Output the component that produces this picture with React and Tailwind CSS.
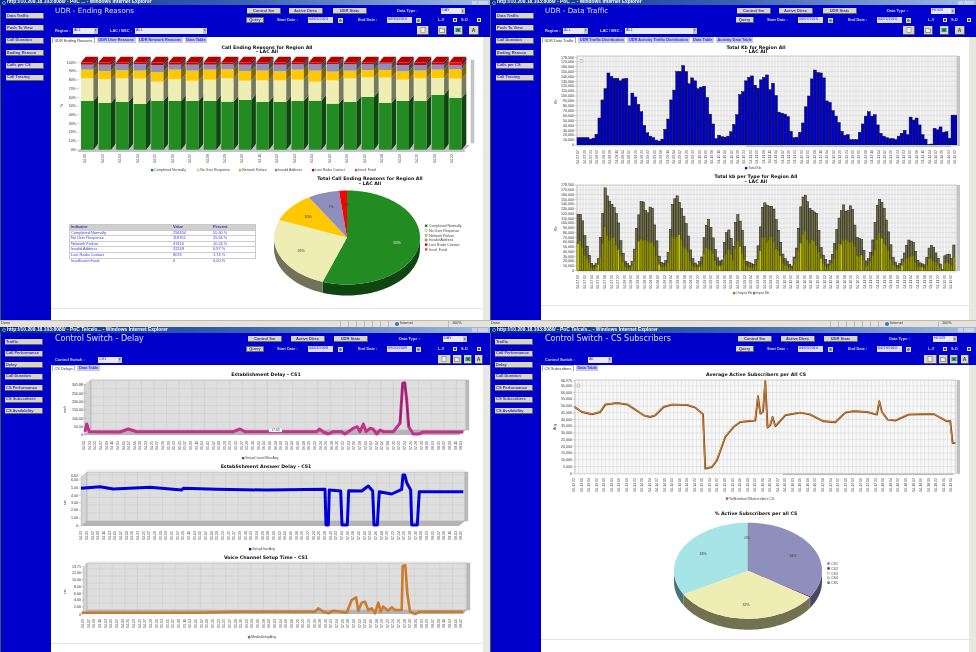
import React from 'react';

// zoom crops were 3x, so most chart points below are kept in crop coords and mapped here
const pts = (list, oy) => list.map(([x, y]) => `${(x / 3).toFixed(1)},${(y / 3 + oy).toFixed(1)}`).join(' ');

const dayLabel = (i, startMonth, startDay) => {
  let m = startMonth, d = startDay + i;
  const len = (mm) => [31, 28, 31, 30, 31, 30, 31, 31, 30, 31, 30, 31][(mm - 1) % 12];
  while (d > len(m)) { d -= len(m); m = m % 12 + 1; }
  return `${String(m).padStart(2, '0')}-${String(d).padStart(2, '0')}`;
};
const hourLabel = (i, day, hour, step) => {
  const h = hour + i * step;
  return `04-${String(day + Math.floor(h / 24)).padStart(2, '0')} ${String(h % 24).padStart(2, '0')}`;
};

const DateTicks = ({ x0, x1, count, y, label, size = 3.5 }) => (
  <g fill="#444" fontSize={size}>
    {Array.from({ length: count }, (_, i) => {
      const x = x0 + (x1 - x0) * i / (count - 1);
      return <text key={i} transform={`translate(${x + 1.2},${y}) rotate(-90)`} textAnchor="end">{label(i)}</text>;
    })}
  </g>
);

const ChartTitle = ({ x, y, lines }) => (
  <g fontSize="4.7" fontWeight="700" fill="#111" textAnchor="middle" className="font-[family-name:DejaVu_Sans,Verdana,sans-serif]">
    {lines.map((t, i) => <text key={t} x={x} y={y + i * 4.8}>{t}</text>)}
  </g>
);

const YTicks = ({ x, items }) => (
  <g fontSize="3.6" fill="#333" textAnchor="end">
    {items.map(([t, y]) => (
      <g key={t + y}>
        <text x={x} y={y + 1.2}>{t}</text>
        <line x1={x + 0.5} x2={x + 2.5} y1={y} y2={y} stroke="#777" strokeWidth="0.4" />
      </g>
    ))}
  </g>
);

const Legend = ({ y, items, size = 3.5 }) => (
  <g fontSize={size} fill="#444">
    {items.map(([t, x, c]) => (
      <g key={t}>
        <rect x={x} y={y - 2} width="2.2" height="2.2" fill={c} stroke="#555" strokeWidth="0.2" />
        <text x={x + 3.2} y={y}>{t}</text>
      </g>
    ))}
  </g>
);

// clockwise from the top, as the chart library drew them
const Pie = ({ cx, cy, rx, ry, depth, slices }) => {
  const at = (a, dy = 0) => {
    const r = a * Math.PI / 180;
    return [cx + rx * Math.sin(r), cy - ry * Math.cos(r) + dy];
  };
  const arc = (a0, a1, dy = 0) => {
    const out = [];
    for (let a = a0; a < a1; a += 2) out.push(at(a, dy));
    out.push(at(a1, dy));
    return out;
  };
  let acc = 0;
  const parts = slices.map((s) => {
    const a0 = acc;
    acc += s.pct * 3.6;
    return { ...s, a0, a1: acc };
  });
  return (
    <g>
      {parts.map((s) => {
        const from = Math.max(s.a0, 90), to = Math.min(s.a1, 270);
        if (from >= to) return null;
        const side = [...arc(from, to), ...arc(from, to, depth).reverse()];
        return <polygon key={s.c + 'side'} points={side.map((p) => p.join(',')).join(' ')} fill={s.side} />;
      })}
      {parts.map((s) => (
        <polygon key={s.c} fill={s.c} points={[[cx, cy], ...arc(s.a0, s.a1)].map((p) => p.join(',')).join(' ')} />
      ))}
    </g>
  );
};

const PieLabels = ({ items }) => (
  <g fontSize="3.6" fill="#333" textAnchor="middle">
    {items.map(([t, x, y, c]) => <text key={t + x} x={x} y={y} fill={c || '#333'}>{t}</text>)}
  </g>
);

/* ---------- UDR ending reasons ---------- */
const GREEN = [303, 309, 306, 312, 303, 303, 303, 303, 305, 300, 306, 306, 303, 302, 311, 306, 291, 309, 303, 303, 285, 294];
const BEIGE = [235, 238, 235, 236, 245, 238, 242, 239, 235, 242, 241, 241, 239, 245, 241, 235, 232, 233, 239, 235, 234, 236];
const YELLOW = [209, 213, 211, 212, 216, 209, 212, 209, 208, 213, 212, 214, 209, 212, 215, 212, 210, 210, 214, 212, 209, 208];
const PURPLE = [194, 194, 193, 192, 195, 194, 194, 194, 193, 194, 192, 194, 193, 193, 192, 193, 193, 191, 195, 195, 194, 196];

const EndingBars = () => (
  <svg className="block" width="432" height="130" viewBox="51 43 432 130">
    <ChartTitle x={267} y={48.5} lines={['Call Ending Reasons for Region All', '- LAC All']} />
    <text transform="translate(62.5,107) rotate(-90)" fontSize="3.6" fill="#333">%</text>
    <YTicks x={76} items={Array.from({ length: 11 }, (_, i) => [`${i * 10}%`, 149.7 - i * 8.73])} />
    <polygon points="79,150 85,145 470,145 464,150" fill="#bdbdbd" />
    <rect x="78" y="150" width="387" height="2" fill="#c4c4c4" />
    <rect x="471" y="60" width="3" height="83" fill="#c8c8c8" stroke="#999" strokeWidth="0.3" />
    {GREEN.map((_, i) => {
      const x = (243 + 52.6 * i) / 3, w = 12.4, dx = 4.7, dy = 5.7;
      const bottom = 449 / 3;
      const segs = [
        [GREEN[i] / 3, bottom, '#228b22', '#0f4510'],
        [BEIGE[i] / 3, GREEN[i] / 3, '#eeeeb4', '#78785c'],
        [YELLOW[i] / 3, BEIGE[i] / 3, '#ffc800', '#806400'],
        [PURPLE[i] / 3, YELLOW[i] / 3, '#8f8fbd', '#48485f'],
        [187 / 3, PURPLE[i] / 3, i === 21 ? '#ff0000' : '#cc0000', '#6a0000'],
      ];
      return (
        <g key={i}>
          {segs.map(([t, b, c, s]) => (
            <g key={c}>
              <rect x={x} y={t} width={w} height={b - t} fill={c} />
              <polygon points={`${x + w},${t} ${x + w + dx},${t - dy} ${x + w + dx},${b - dy} ${x + w},${b}`} fill={s} />
            </g>
          ))}
          <polygon points={`${x},${187 / 3} ${x + w},${187 / 3} ${x + w + dx},${187 / 3 - dy} ${x + dx},${187 / 3 - dy}`} fill="#b00000" />
        </g>
      );
    })}
    <DateTicks x0={85} x1={452} count={22} y={154} label={(i) => `04-${String(i + 1).padStart(2, '0')}`} />
    <Legend y={171} items={[
      ['Completed Normally', 151, '#228b22'], ['No User Response', 197, '#eeeeb4'], ['Network Failure', 239, '#ffc800'],
      ['Invalid Address', 275, '#8f8fbd'], ['Lost Radio Contact', 312, '#cc0000'], ['Insuf. Fund', 355, '#ff5555'],
    ]} />
  </svg>
);

const REASONS = [
  ['Completed Normally', '256454', '55.40 %'],
  ['No User Response', '118702', '25.64 %'],
  ['Network Failure', '47416', '10.24 %'],
  ['Invalid Address', '32249', '6.97 %'],
  ['Lost Radio Contact', '8074', '1.74 %'],
  ['Insufficient Fund', '0', '0.00 %'],
];

const ReasonTable = () => (
  <div className="ml-[18px] mt-[51px] h-[35px] w-[187px] shrink-0 border-[1.5px] border-[#c8c8c8] bg-[#e4e4e4]">
    <table className="w-full table-fixed border-collapse text-[3.9px] leading-[4.6px] text-[#3a3ae0]">
      <thead>
        <tr className="bg-[#cfcfcf] text-[#3a3aa0] text-left">
          <th className="w-[102px] px-[1px] font-bold">Indicator</th>
          <th className="w-[40px] px-[1px] font-bold">Value</th>
          <th className="px-[1px] font-bold">Percent</th>
        </tr>
      </thead>
      <tbody>
        {REASONS.map(([a, b, c]) => (
          <tr key={a} className="bg-white border-t-[0.5px] border-[#ccc]">
            <td className="px-[1px]">{a}</td>
            <td className="px-[1px]">{b}</td>
            <td className="px-[1px]">{c}</td>
          </tr>
        ))}
      </tbody>
    </table>
  </div>
);

const EndingPie = () => (
  <svg className="block ml-[8px]" width="219" height="135" viewBox="264 173 219 135">
    <ChartTitle x={370} y={180} lines={['Total Call Ending Reasons for Region All', '- LAC All']} />
    <Pie cx={347} cy={237.5} rx={73} ry={47} depth={11} slices={[
      { pct: 55.4, c: '#228b22', side: '#0f4510' },
      { pct: 25.64, c: '#eeeeb4', side: '#72725a' },
      { pct: 10.24, c: '#ffc800', side: '#806400' },
      { pct: 6.97, c: '#8f8fbd', side: '#48485f' },
      { pct: 1.75, c: '#ff0000', side: '#800000' },
    ]} />
    <PieLabels items={[['55%', 397, 244, '#fff'], ['26%', 301, 252], ['10%', 308, 218], ['7%', 331, 208], ['2%', 346, 206]]} />
    <g fontSize="3.6" fill="#444">
      {[['Completed Normally', '#228b22'], ['No User Response', '#eeeeb4'], ['Network Failure', '#ffc800'], ['Invalid Address', '#8f8fbd'], ['Lost Radio Contact', '#cc0000'], ['Insuf. Fund', '#ff5555']].map(([t, c], i) => (
        <g key={t}>
          <rect x="425" y={224.8 + i * 4.7} width="2.2" height="2.2" fill={c} stroke="#555" strokeWidth="0.2" />
          <text x="429" y={227.2 + i * 4.7}>{t}</text>
        </g>
      ))}
    </g>
  </svg>
);

/* ---------- UDR data traffic ---------- */
const TRAFFIC = [15, 15, 15, 15, 12, 14, 22, 55, 92, 115, 147, 140, 136, 136, 131, 135, 136, 80, 106, 98, 83, 68, 40, 25, 18, 15, 10, 8, 12, 32, 53, 92, 112, 150, 150, 162, 150, 125, 137, 131, 115, 118, 120, 97, 63, 43, 13, 20, 17, 16, 18, 27, 42, 62, 103, 109, 131, 138, 141, 122, 116, 133, 138, 143, 113, 126, 101, 67, 65, 63, 58, 28, 15, 16, 26, 45, 78, 100, 135, 153, 148, 147, 137, 90, 87, 70, 59, 46, 28, 20, 21, 11, 11, 11, 26, 43, 59, 68, 59, 62, 41, 24, 18, 15, 13, 13, 11, 18, 24, 30, 21, 57, 51, 55, 41, 21, 12, 1, 2, 34, 31, 37, 26, 27, 14, 61, 61];

// top outline of the stacked chart, [crop x, thousand kb], bars are sampled from it
const TYPE_ENVELOPE = [[262, 118], [275, 118], [285, 72], [295, 40], [305, 15], [315, 10], [325, 25], [335, 90], [345, 175], [355, 150], [375, 130], [385, 105], [395, 50], [405, 20], [420, 10], [430, 25], [440, 90], [455, 152], [463, 140], [470, 115], [485, 142], [497, 80], [510, 18], [525, 15], [535, 40], [548, 140], [560, 160], [575, 130], [590, 95], [605, 30], [620, 10], [635, 25], [645, 85], [655, 110], [665, 85], [680, 30], [695, 15], [705, 70], [715, 90], [730, 50], [740, 125], [755, 95], [770, 20], [795, 12], [805, 55], [820, 146], [835, 135], [850, 135], [865, 85], [880, 30], [905, 8], [920, 50], [935, 150], [945, 161], [960, 130], [980, 120], [995, 40], [1015, 12], [1030, 40], [1045, 105], [1060, 140], [1070, 120], [1085, 142], [1100, 70], [1115, 65], [1130, 15], [1145, 45], [1165, 153], [1180, 140], [1195, 85], [1210, 25], [1225, 8], [1240, 30], [1255, 65], [1270, 60], [1285, 18], [1305, 12], [1320, 55], [1330, 50], [1345, 25], [1358, 2], [1365, 33], [1378, 35], [1385, 25], [1393, 60], [1400, 60]];

const envelopeAt = (x) => {
  for (let i = 1; i < TYPE_ENVELOPE.length; i++) {
    const [x0, v0] = TYPE_ENVELOPE[i - 1], [x1, v1] = TYPE_ENVELOPE[i];
    if (x <= x1) return v0 + (v1 - v0) * (x - x0) / (x1 - x0);
  }
  return 60;
};

const GridWall = ({ x0, x1, y0, y1, dx, ys, fill = '#f3f3f3' }) => {
  const xs = [];
  for (let x = x0; x < x1; x += dx) xs.push(x);
  return (
    <g>
      <rect x={x0} y={y0} width={x1 - x0} height={y1 - y0} fill={fill} stroke="#999" strokeWidth="0.5" />
      {xs.map((x) => <line key={x} x1={x} x2={x} y1={y0} y2={y1} stroke="#c8c8c8" strokeWidth="0.35" />)}
      {ys.map((y) => <line key={y} x1={x0} x2={x1} y1={y} y2={y} stroke="#c8c8c8" strokeWidth="0.35" />)}
    </g>
  );
};

const kLabel = (k) => (k === 0 ? '0' : `${k},000`);

const TrafficChart = () => {
  const sc = 0.49, y0 = 145;
  const ticks = Array.from({ length: 18 }, (_, i) => [kLabel(i * 10), y0 - i * 10 * sc]);
  const w = 380 / TRAFFIC.length;
  return (
    <svg className="block" width="432" height="130" viewBox="51 43 432 130">
      <ChartTitle x={266} y={48.5} lines={['Total Kb for Region All', '- LAC All']} />
      <text transform="translate(67,104) rotate(-90)" fontSize="3.6" fill="#333">Kb</text>
      <YTicks x={84} items={[['178,560', 57.3], ...ticks]} />
      <GridWall x0={87} x1={467} y0={56} y1={145} dx={3} ys={ticks.map((t) => t[1])} />
      {TRAFFIC.map((v, i) => (
        <rect key={i} x={87 + i * w} y={y0 - v * sc} width={w} height={v * sc} fill="#0000cc" stroke="#111" strokeWidth="0.45" />
      ))}
      <rect x="467" y="56" width="3" height="90" fill="#c4c4c4" />
      <rect x="87" y="145.5" width="380" height="1.6" fill="#eee" />
      <rect x="256" y="145.5" width="205" height="1.6" fill="#c0c0c0" />
      <rect x="90" y="59.5" width="3" height="3" fill="#e8e8e8" stroke="#888" strokeWidth="0.3" />
      <DateTicks x0={88} x1={465} count={60} y={150} label={(i) => hourLabel(i, 7, 17, 3)} />
      <Legend y={169} items={[['Total Kb', 255, '#0000cc']]} />
    </svg>
  );
};

const TypeChart = () => {
  const sc = 0.476, y0 = 270.7, w = 2.25;
  const ticks = Array.from({ length: 18 }, (_, i) => [kLabel(i * 10), y0 - i * 10 * sc]);
  const bars = Array.from({ length: 168 }, (_, i) => envelopeAt((87 + i * w + w / 2) * 3));
  return (
    <svg className="block" width="432" height="132" viewBox="51 173 432 132">
      <ChartTitle x={266} y={178} lines={['Total kb per Type for Region All', '- LAC All']} />
      <text transform="translate(67,231) rotate(-90)" fontSize="3.6" fill="#333">Kb</text>
      <YTicks x={84} items={[['178,560', 185], ...ticks]} />
      <GridWall x0={87} x1={467} y0={185} y1={270.7} dx={3} ys={ticks.map((t) => t[1])} />
      {bars.map((v, i) => {
        const out = v * (0.48 + 0.05 * Math.sin(i * 1.7));
        const top = Math.max(185, y0 - v * sc);
        return (
          <g key={i}>
            <rect x={87 + i * w} y={top} width={w} height={y0 - top} fill="#6f6f4c" stroke="#1f1f14" strokeWidth="0.5" />
            <rect x={87 + i * w} y={y0 - out * sc} width={w} height={out * sc} fill={i % 9 === 0 ? '#c8c800' : '#8f8f00'} stroke="#5c5c00" strokeWidth="0.3" />
          </g>
        );
      })}
      <rect x="467" y="185" width="3" height="86" fill="#c4c4c4" />
      <rect x="87" y="271" width="380" height="1.4" fill="#e4e4e4" />
      <DateTicks x0={88} x1={461} count={57} y={275} label={(i) => hourLabel(i, 7, 10, 2)} />
      <Legend y={294} items={[['Output Kb', 243, '#999900'], ['Input Kb', 263, '#80805a']]} />
    </svg>
  );
};

/* ---------- control switch delay, 3D line charts ---------- */
const Wall3D = ({ fx, bx, rx, top, by, fy, cols, ticks }) => {
  const xs = [];
  for (let x = bx; x < rx; x += cols) xs.push(x);
  return (
    <g>
      <polygon points={`${fx},${top + 5} ${bx},${top} ${bx},${by} ${fx},${fy}`} fill="#d4d4d4" stroke="#999" strokeWidth="0.3" />
      <rect x={bx} y={top} width={rx - bx} height={by - top} fill="#dedede" stroke="#999" strokeWidth="0.4" />
      {xs.map((x) => <line key={x} x1={x} x2={x} y1={top} y2={by} stroke="#c4c4c4" strokeWidth="0.4" />)}
      {ticks.map((y) => <line key={y} x1={bx} x2={rx} y1={y - (fy - by)} y2={y - (fy - by)} stroke="#c4c4c4" strokeWidth="0.4" />)}
      <polygon points={`${fx},${fy} ${bx},${by} ${rx},${by} ${rx - (bx - fx)},${fy}`} fill="#b4b4b4" />
      <rect x={rx} y={top} width="3" height={by - top} fill="#bcbcbc" stroke="#999" strokeWidth="0.3" />
    </g>
  );
};

const LINE_A = [[255, 335], [260, 312], [268, 335], [360, 336], [385, 327], [410, 335], [700, 335], [720, 327], [735, 335], [950, 335], [958, 327], [970, 336], [985, 342], [1000, 335], [1025, 335], [1035, 342], [1060, 325], [1072, 320], [1080, 335], [1090, 312], [1098, 335], [1110, 325], [1120, 328], [1130, 342], [1140, 330], [1150, 335], [1180, 335], [1200, 310], [1208, 190], [1214, 188], [1220, 240], [1226, 320], [1240, 342], [1255, 342], [1270, 336], [1390, 336]];
const LINE_B = [[243, 25], [300, 20], [340, 27], [450, 22], [545, 30], [550, 25], [650, 28], [800, 30], [975, 28], [978, 135], [985, 135], [988, 30], [1022, 33], [1026, 135], [1042, 135], [1046, 32], [1085, 33], [1105, 18], [1118, 33], [1122, 135], [1132, 135], [1138, 35], [1175, 42], [1205, 28], [1209, -15], [1214, -15], [1220, 8], [1232, 30], [1235, 135], [1252, 135], [1258, 35], [1390, 35]];
const LINE_C = [[245, 398], [600, 398], [700, 395], [945, 395], [955, 385], [970, 395], [985, 400], [1000, 392], [1040, 398], [1055, 360], [1068, 352], [1075, 392], [1085, 368], [1095, 365], [1105, 390], [1115, 385], [1125, 400], [1135, 368], [1142, 395], [1150, 380], [1165, 392], [1175, 382], [1185, 390], [1205, 390], [1208, 258], [1216, 256], [1222, 340], [1230, 395], [1245, 402], [1260, 395], [1390, 395]];

const DelayChart = () => (
  <svg className="block" width="432" height="272" viewBox="51 371 432 272">
    <ChartTitle x={266} y={376} lines={['Establishment Delay - CS1']} />
    <text transform="translate(66,413) rotate(-90)" fontSize="3.4" fill="#333">ms/s</text>
    <Wall3D fx={84} bx={91} rx={466} top={380} by={430} fy={435} cols={12.6} ticks={[385, 393.5, 402, 410.5, 418.5, 427]} />
    <YTicks x={83} items={[['305.88', 384.5], ['250.00', 393.3], ['200.00', 401.7], ['150.00', 410], ['100.00', 418.3], ['50.00', 426.7], ['0', 435]]} />
    <polyline points={pts(LINE_A, 320)} fill="none" stroke="#c4308c" strokeWidth="3" strokeLinejoin="round" />
    <polyline points={pts(LINE_A.slice(27, 32), 320)} fill="none" stroke="#8c2068" strokeWidth="1.2" />
    <rect x="269" y="428" width="13" height="4" fill="#fff" stroke="#bbb" strokeWidth="0.3" />
    <text x="275.5" y="431" fontSize="3.3" textAnchor="middle" fill="#333">17.63</text>
    <DateTicks x0={84} x1={461} count={68} y={441} label={(i) => dayLabel(i * 2, 4, 1)} />
    <Legend y={459} items={[['SetupCrossOfficeAvg', 242, '#b03080']]} />

    <ChartTitle x={266} y={467.5} lines={['Establishment Answer Delay - CS1']} />
    <text transform="translate(66,505) rotate(-90)" fontSize="3.4" fill="#333">sec</text>
    <Wall3D fx={81} bx={87} rx={465} top={472} by={521} fy={526} cols={12.6} ticks={[475, 480, 488, 495, 502.5, 510, 518]} />
    <YTicks x={78} items={[['6.62', 475.3], ['6.00', 480], ['5.00', 488], ['4.00', 495.3], ['3.00', 502.7], ['2.00', 510], ['1.00', 518], ['0', 526]]} />
    <polyline points={pts(LINE_B, 480)} fill="none" stroke="#0000d8" strokeWidth="3" strokeLinejoin="round" />
    <DateTicks x0={81} x1={461} count={68} y={531} label={(i) => dayLabel(i * 2, 4, 3)} />
    <Legend y={550} items={[['SetupUserAvg', 249, '#0000cc']]} />

    <ChartTitle x={266} y={559} lines={['Voice Channel Setup Time - CS1']} />
    <text transform="translate(66,594) rotate(-90)" fontSize="3.4" fill="#333">sec</text>
    <Wall3D fx={83} bx={87} rx={467} top={563} by={610} fy={614} cols={12.6} ticks={[566, 573, 580, 587, 593, 600, 607]} />
    <YTicks x={81} items={[['13.71', 566.5], ['12.00', 572.7], ['10.00', 579.7], ['8.00', 586.7], ['6.00', 593.3], ['4.00', 600], ['2.00', 607], ['0', 614.3]]} />
    <polyline points={pts(LINE_C, 480)} fill="none" stroke="#cc7a2c" strokeWidth="2.6" strokeLinejoin="round" />
    <DateTicks x0={83} x1={461} count={68} y={619} label={(i) => dayLabel(i * 2, 4, 5)} />
    <Legend y={638} items={[['MediaSetupAvg', 248, '#b4682a']]} />
  </svg>
);

/* ---------- active subscribers ---------- */
const SUBS = [[253, 260], [275, 275], [305, 282], [330, 275], [345, 253], [380, 248], [412, 253], [435, 268], [460, 285], [480, 290], [495, 285], [520, 260], [545, 253], [590, 254], [615, 262], [638, 282], [645, 445], [665, 440], [680, 420], [705, 350], [730, 320], [750, 305], [795, 301], [803, 228], [810, 280], [818, 275], [825, 183], [832, 322], [840, 315], [847, 290], [855, 318], [885, 285], [930, 277], [960, 283], [1000, 303], [1035, 306], [1065, 277], [1090, 273], [1130, 275], [1160, 283], [1167, 243], [1175, 275], [1192, 298], [1215, 301], [1255, 283], [1330, 281], [1370, 303], [1380, 302], [1387, 368], [1395, 368]];

const SubscribersChart = () => {
  const ticks = Array.from({ length: 14 }, (_, i) => [kLabel(i * 5), 473.3 - i * 6.73]);
  return (
    <svg className="block" width="432" height="132" viewBox="51 371 432 132">
      <ChartTitle x={266} y={376} lines={['Average Active Subscribers per All CS']} />
      <text transform="translate(66,430) rotate(-90)" fontSize="3.6" fill="#333">Avg</text>
      <YTicks x={82} items={[['66,975', 381], ...ticks]} />
      <GridWall x0={85} x1={466} y0={380} y1={473.3} dx={3.8} ys={ticks.map((t) => t[1])} fill="#f8f8f8" />
      <polyline points={pts(SUBS, 320)} fill="none" stroke="#7a4a1c" strokeWidth="1.9" strokeLinejoin="round" transform="translate(0.3,0.3)" />
      <polyline points={pts(SUBS, 320)} fill="none" stroke="#cc7f36" strokeWidth="1.1" strokeLinejoin="round" />
      <rect x="467" y="380" width="3" height="94" fill="#c0c0c0" />
      <rect x="85" y="473.5" width="381" height="1.6" fill="#eee" />
      <rect x="293" y="473.5" width="170" height="1.6" fill="#bcbcbc" />
      <rect x="87" y="384" width="3" height="3" fill="#e8e8e8" stroke="#888" strokeWidth="0.3" />
      <DateTicks x0={84} x1={461} count={51} y={478} label={(i) => hourLabel(i, 12, 22, 3)} />
      <Legend y={499.5} items={[['TotNumberOfSubscribers CS', 236, '#b4682a']]} />
    </svg>
  );
};

const SubscribersPie = () => (
  <svg className="block" width="432" height="136" viewBox="51 503 432 136">
    <ChartTitle x={266} y={514.5} lines={['% Active Subscribers per all CS']} />
    <Pie cx={258} cy={570.7} rx={74} ry={48} depth={11} slices={[
      { pct: 34, c: '#8f8fbd', side: '#48485f' },
      { pct: 0.3, c: '#800080', side: '#400040' },
      { pct: 32.5, c: '#eeeeb4', side: '#727250' },
      { pct: 33.2, c: '#a6e4e8', side: '#4a7078' },
    ]} />
    <line x1="258" y1="523" x2="258" y2="570.7" stroke="#6a9a40" strokeWidth="0.4" />
    <PieLabels items={[['34%', 303, 556.5], ['32%', 256, 606], ['33%', 213, 555], ['0%', 257, 538.5]]} />
    <g fontSize="3.6" fill="#444">
      {[['CS1', '#8f8fbd'], ['CS2', '#800080'], ['CS3', '#eeeeb4'], ['CS4', '#a6e4e8'], ['CS5', '#669900']].map(([t, c], i) => (
        <g key={t}>
          <rect x="337.5" y={562.5 + i * 4.8} width="2.2" height="2.2" fill={c} stroke="#555" strokeWidth="0.2" />
          <text x="341" y={565 + i * 4.8}>{t}</text>
        </g>
      ))}
    </g>
  </svg>
);

/* ---------- window chrome ---------- */
const TitleBar = ({ text, className }) => (
  <div className={`flex items-center bg-gradient-to-r from-[#0a2a88] via-[#3a62b0] to-[#a4bce4] ${className}`}>
    <svg width="4" height="4" viewBox="0 0 8 8" className="ml-[2px] shrink-0">
      <circle cx="4" cy="4" r="3" fill="none" stroke="#6cc0f0" strokeWidth="1.6" />
    </svg>
    <span className="ml-[1px] text-[4.9px] font-bold leading-none text-white">{text}</span>
    <div className="ml-auto mr-[2px] flex gap-[0.5px]">
      <span className="h-[4px] w-[5px] bg-[#c8d4e8]" />
      <span className="h-[4px] w-[5px] bg-[#c8d4e8]" />
      <span className="h-[4px] w-[5px] bg-[#c8d4e8]" />
    </div>
  </div>
);

const StatusBar = () => (
  <div className="flex h-[7px] items-center border-t border-[#bbb] bg-[#e6e3d6] text-[3.8px] text-[#333]">
    <span className="ml-[1px] w-[339px]">Done</span>
    <span className="h-full w-[8px] border-l border-[#bbb]" />
    <span className="h-full w-[8px] border-l border-[#bbb]" />
    <span className="h-full w-[8px] border-l border-[#bbb]" />
    <span className="h-full w-[8px] border-l border-[#bbb]" />
    <span className="h-full w-[8px] border-l border-[#bbb]" />
    <span className="h-full w-[8px] border-l border-[#bbb]" />
    <span className="flex h-full w-[60px] items-center border-l border-[#bbb] pl-[6px]">
      <span className="mr-[1px] h-[4px] w-[4px] rounded-full bg-[#3a78b8]" />Internet
    </span>
    <span className="flex h-full items-center border-l border-[#bbb] pl-[3px]">100%</span>
  </div>
);

const BTN = 'flex items-center justify-center border-b border-r border-[#666] bg-[#d8d4c8] text-[4px] font-bold leading-none text-[#3434a8]';

const DateBox = ({ value }) => (
  <span className="flex h-[6px] w-[25px] shrink-0 items-center bg-[#dcdcf4] pl-[1px] text-[3.8px] text-[#2828cc]">{value}</span>
);
const CalIcon = ({ className }) => (
  <svg width="5" height="5" viewBox="0 0 10 10" className={`shrink-0 ${className}`}>
    <rect width="10" height="10" fill="#d8d8d8" />
    <circle cx="5" cy="5" r="3" fill="#5c7c9c" />
  </svg>
);
const Check = () => (
  <span className="flex h-[4px] w-[4px] shrink-0 items-center justify-center bg-[#ddd]">
    <span className="h-[2px] w-[2px] bg-[#444]" />
  </span>
);
const Select = ({ value, className }) => (
  <span className={`flex h-[6px] shrink-0 items-center justify-between bg-[#e8e8f8] pl-[1px] text-[3.8px] text-[#2828cc] ${className}`}>
    {value}
    <span className="flex h-full w-[4px] items-center justify-center bg-[#c8c4b8] text-[3px] text-[#222]">▾</span>
  </span>
);
const Label = ({ children, className }) => (
  <span className={`shrink-0 text-[3.9px] font-bold leading-none text-[#d8d8f8] ${className}`}>{children}</span>
);

const ToolIcon = ({ kind }) => {
  if (kind === 'doc') return <svg width="6" height="6" viewBox="0 0 12 12"><rect x="2" y="1" width="8" height="10" fill="#f4f4f0" stroke="#666" /></svg>;
  if (kind === 'folder') return <svg width="6" height="6" viewBox="0 0 12 12"><path d="M1 3h4l1 1h5v7H1z" fill="#eee" stroke="#445" /></svg>;
  if (kind === 'xl') return <svg width="6" height="6" viewBox="0 0 12 12"><rect x="1" y="2" width="10" height="8" fill="#2a9a80" /><path d="M3 3l6 6M9 3l-6 6" stroke="#123" /></svg>;
  return <span className="text-[5px] font-bold leading-none text-[#333]">A</span>;
};

const Tools = ({ upper }) => {
  const sizes = upper
    ? ['w-[12px]', 'ml-[9px] w-[9px]', 'ml-[7px] w-[9px]', 'ml-[6px] w-[10px]']
    : ['w-[13px]', 'ml-[2px] w-[9px]', 'ml-[2px] w-[8px]', 'ml-[3px] w-[8px]'];
  return (
    <div className={`ml-auto flex ${upper ? 'mr-[11px]' : 'mr-[7px]'}`}>
      {['doc', 'folder', 'xl', 'a'].map((k, i) => (
        <span key={k} className={`flex h-[9px] items-center justify-center border-b border-r border-[#555] bg-[#d8d4c8] ${sizes[i]}`}>
          <ToolIcon kind={k} />
        </span>
      ))}
    </div>
  );
};

const Header = ({ upper, title, titleClass, dataType, start, end, queryDown, filter }) => (
  <div className="flex h-[32px] shrink-0 flex-col bg-[#0000cc] pt-[3px]">
    <div className="flex h-[6px] items-center">
      <h1 className={`shrink-0 pl-[4px] font-[family-name:DejaVu_Sans,Verdana,sans-serif] font-normal leading-none text-[#d8e0ff] ${upper ? 'w-[196px]' : 'w-[197px]'} ${titleClass}`}>{title}</h1>
      <button className={`${BTN} h-[6px] w-[34px]`}>Control Sw</button>
      <button className={`${BTN} h-[6px] w-[34px] ${upper ? 'ml-[8px]' : 'ml-[9px]'}`}>Active Direc</button>
      <button className={`${BTN} h-[6px] w-[34px] ${upper ? 'ml-[10px]' : 'ml-[9px]'}`}>UDR Stats</button>
      <Label className={`w-[44px] ${upper ? 'ml-[30px]' : 'ml-[31px]'}`}>Data Type :</Label>
      <Select value={dataType} className="w-[24px]" />
    </div>
    <div className={`flex h-[6px] items-center ${upper ? 'mt-[3px]' : 'mt-[4px]'}`}>
      <button className={`${BTN} ml-[195px] h-[6px] w-[18px] ${queryDown ? 'border border-[#222]' : ''}`}>Query</button>
      <Label className="ml-[13px] w-[31px]">Start Date :</Label>
      <DateBox value={start} />
      <CalIcon className="ml-[5px]" />
      <Label className="ml-[15px] w-[29px]">End Date :</Label>
      <DateBox value={end} />
      <CalIcon className="ml-[4px]" />
      <Label className="ml-[17px] w-[15px]">L-V</Label>
      <Check />
      <Label className="ml-[4px] w-[16px]">S-D</Label>
      <Check />
    </div>
    <div className="mt-[3px] flex h-[9px] items-center">
      {filter === 'region' ? (
        <>
          <Label className="ml-[4px] w-[18px]">Region :</Label>
          <Select value="ALL" className="w-[25px]" />
          <Label className="ml-[12px] w-[25px]">LAC / BSC :</Label>
          <Select value="ALL" className="w-[72px]" />
        </>
      ) : (
        <>
          <Label className="ml-[4px] w-[43px]">Control Switch :</Label>
          <Select value={filter} className="w-[24px]" />
        </>
      )}
      <Tools upper={upper} />
    </div>
  </div>
);

const Tabs = ({ items }) => (
  <div className="flex h-[6px] shrink-0 items-end pl-[1px] text-[3.9px] leading-none">
    {items.map((t, i) => (
      <span
        key={t}
        className={i === 0
          ? 'flex h-[6px] items-center border border-b-0 border-[#aaa] bg-white px-[1.5px] text-[#333]'
          : 'ml-[2px] flex h-[6px] items-center bg-[#c8c8ec] px-[1.5px] font-bold text-[#3434c0]'}
      >
        {t}
      </span>
    ))}
  </div>
);

const Sidebar = ({ upper, items }) => (
  <nav className={`flex w-[51px] shrink-0 flex-col border-l border-[#555] bg-[#0000cc] ${upper ? 'gap-[6.4px] pl-[5px] pt-[8px]' : 'gap-[5.5px] pl-[4px] pt-[6px]'}`}>
    {items.map((t) => (
      <button key={t} className={`${BTN} h-[6px] w-[38px] !justify-start pl-[1px]`}>{t}</button>
    ))}
  </nav>
);

const Window = ({ upper, title, titleClass, nav, tabs, dataType, start, end, queryDown, filter, barText, children }) => (
  <section className="flex flex-col overflow-hidden">
    <TitleBar text={barText} className={upper ? 'h-[5px]' : 'h-[6px]'} />
    <div className="flex min-h-0 flex-1">
      <Sidebar upper={upper} items={nav} />
      <div className="flex min-w-0 flex-1 flex-col">
        <Header upper={upper} title={title} titleClass={titleClass} dataType={dataType} start={start} end={end} queryDown={queryDown} filter={filter} />
        <div className="flex min-h-0 flex-1 border-r-[7px] border-[#e8e8e2] bg-white">
          <div className="flex w-[432px] flex-col">
            <Tabs items={tabs} />
            {children}
          </div>
        </div>
      </div>
    </div>
    {upper && <StatusBar />}
  </section>
);

const UDR_NAV = ['Data Traffic', 'Push To View', 'Call Duration', 'Ending Reason', 'Calls per CS', 'Call Tracing'];
const CS_NAV = ['Traffic', 'Call Performance', 'Delay', 'Call Duration', 'CS Performance', 'CS Subscribers', 'CS Availability'];

export default function App() {
  return (
    <div className="grid h-[652px] w-[976px] grid-cols-[490px_486px] grid-rows-[327px_325px] overflow-hidden bg-[#e6e3d6] font-[family-name:Liberation_Sans,Arial,sans-serif] blur-[0.5px]">
      <Window
        upper
        barText="http://10.209.18.103:8080/ - PoC ... - Windows Internet Explorer"
        title="UDR - Ending Reasons"
        titleClass="text-[7.1px]"
        nav={UDR_NAV}
        tabs={['UDR Ending Reasons', 'UDR User Reasons', 'UDR Network Reasons', 'Data Table']}
        dataType="DAY"
        start="04/01/2010"
        end="04/30/2010"
        queryDown
        filter="region"
      >
        <EndingBars />
        <div className="flex h-[135px] shrink-0">
          <ReasonTable />
          <EndingPie />
        </div>
        <div className="border-t border-[#e4e4e4]" />
      </Window>

      <Window
        upper
        barText="http://10.209.18.103:8080/ - PoC ... - Windows Internet Explorer"
        title="UDR - Data Traffic"
        titleClass="text-[7.1px]"
        nav={UDR_NAV}
        tabs={['UDR Data Traffic', 'UDR Traffic Distribution', 'UDR Activity Traffic Distribution', 'Data Table', 'Activity Data Table']}
        dataType="HOUR"
        start="04/07/2010"
        end="04/21/2010"
        filter="region"
      >
        <TrafficChart />
        <TypeChart />
        <div className="border-t border-[#e4e4e4]" />
      </Window>

      <Window
        barText="http://10.209.18.103:8080/ - PoC Telcels... - Windows Internet Explorer"
        title="Control Switch - Delay"
        titleClass="text-[8px]"
        nav={CS_NAV}
        tabs={['CS Delays', 'Data Table']}
        dataType="DAY"
        start="04/01/2008"
        end="09/20/2009"
        queryDown
        filter="CS1"
      >
        <DelayChart />
        <div className="border-t border-[#e4e4e4]" />
      </Window>

      <Window
        barText="http://10.209.18.103:8080/ - PoC Telcels... - Windows Internet Explorer"
        title="Control Switch - CS Subscribers"
        titleClass="text-[8px]"
        nav={CS_NAV}
        tabs={['CS Subscribers', 'Data Table']}
        dataType="HOUR"
        start="04/05/2010"
        end="04/19/2010"
        filter="All"
      >
        <SubscribersChart />
        <SubscribersPie />
        <div className="border-t border-[#e4e4e4]" />
      </Window>
    </div>
  );
}
